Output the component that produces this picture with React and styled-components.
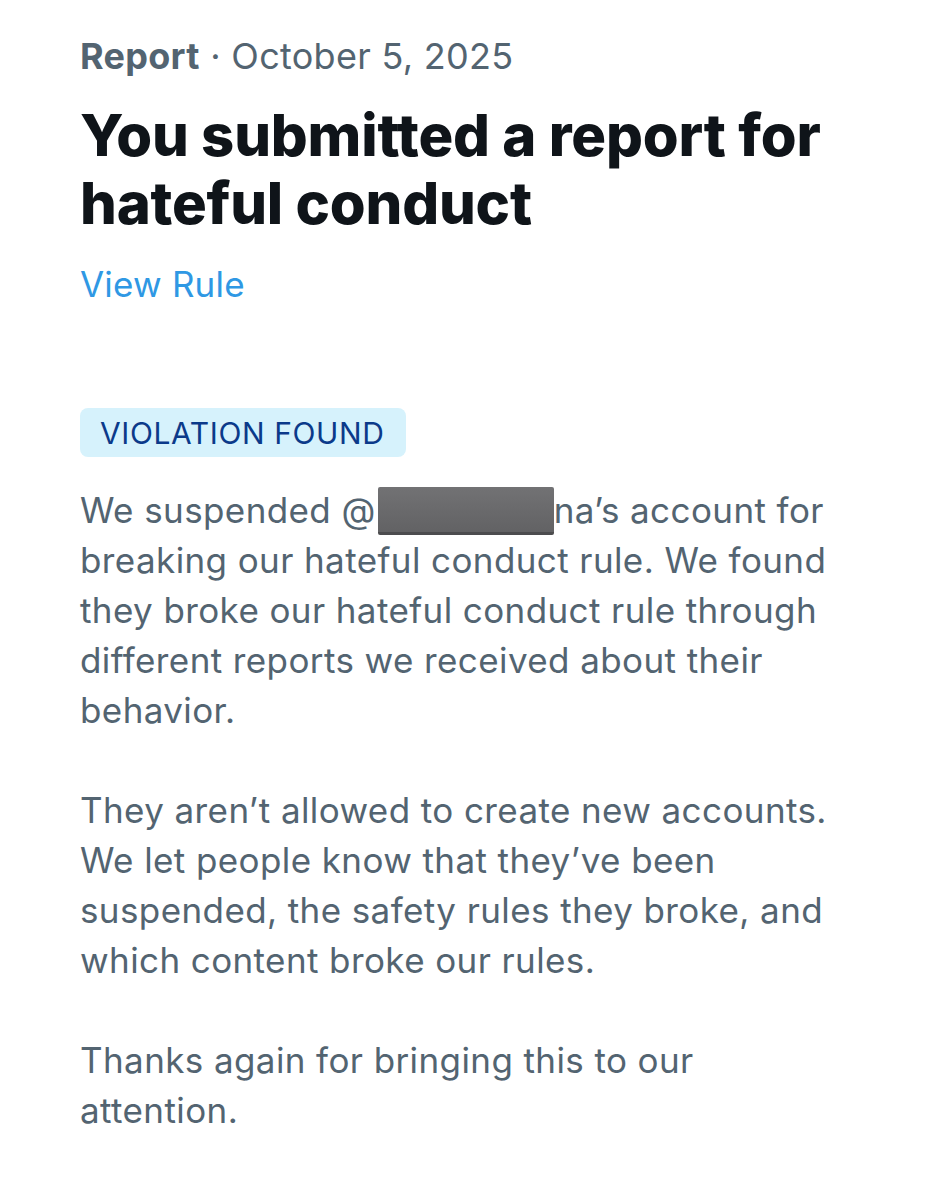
import React from 'react'
import styled, { createGlobalStyle } from 'styled-components'

const GlobalStyle = createGlobalStyle`
    body {
        margin: 0;
        background: #ffffff;
    }
`

const Page = styled.div`
    padding: 36px 80px 60px;
    font-family: Inter, "Noto Sans", sans-serif;
`

const Meta = styled.div`
    font-size: 36px;
    line-height: 40px;
    color: #536471;
    letter-spacing: 0.3px;

    b {
        font-weight: 700;
    }
`

const Title = styled.h1`
    margin: 25px 0 0;
    font-size: 58px;
    line-height: 68px;
    font-weight: 800;
    color: #0f1419;
    letter-spacing: -0.2px;
`

const RuleLink = styled.a`
    display: inline-block;
    margin-top: 27px;
    font-size: 35px;
    line-height: 40px;
    color: #2f98e4;
    text-decoration: none;
    letter-spacing: 0.2px;
`

const Badge = styled.div`
    display: inline-flex;
    align-items: center;
    height: 49px;
    padding: 0 22px 0 20px;
    margin-top: 104px;
    border-radius: 8px;
    background: #d6f2fc;
    color: #0b3a8a;
    font-size: 30px;
    letter-spacing: 0.6px;
`

const Body = styled.div`
    margin-top: 28px;
    font-size: 35px;
    line-height: 50px;
    color: #536471;
    letter-spacing: 0.4px;
`

const Paragraph = styled.p`
    margin: 0 0 50px;
`

const Redacted = styled.span`
    display: inline-block;
    width: 176px;
    height: 45px;
    margin-left: 2px;
    vertical-align: -12px;
    background: linear-gradient(#727274, #626264);
    border-bottom: 3px solid #4c4c4e;
    border-radius: 2px;
`

export default function App() {
    return (
        <Page>
            <GlobalStyle />
            <Meta><b>Report</b> · October 5, 2025</Meta>
            <Title>You submitted a report for<br />hateful conduct</Title>
            <RuleLink href="#">View Rule</RuleLink>
            <div>
                <Badge>VIOLATION FOUND</Badge>
            </div>
            <Body>
                <Paragraph>
                    We suspended @<Redacted />na’s account for<br />
                    breaking our hateful conduct rule. We found<br />
                    they broke our hateful conduct rule through<br />
                    different reports we received about their<br />
                    behavior.
                </Paragraph>
                <Paragraph>
                    They aren’t allowed to create new accounts.<br />
                    We let people know that they’ve been<br />
                    suspended, the safety rules they broke, and<br />
                    which content broke our rules.
                </Paragraph>
                <Paragraph>
                    Thanks again for bringing this to our<br />
                    attention.
                </Paragraph>
            </Body>
        </Page>
    )
}
